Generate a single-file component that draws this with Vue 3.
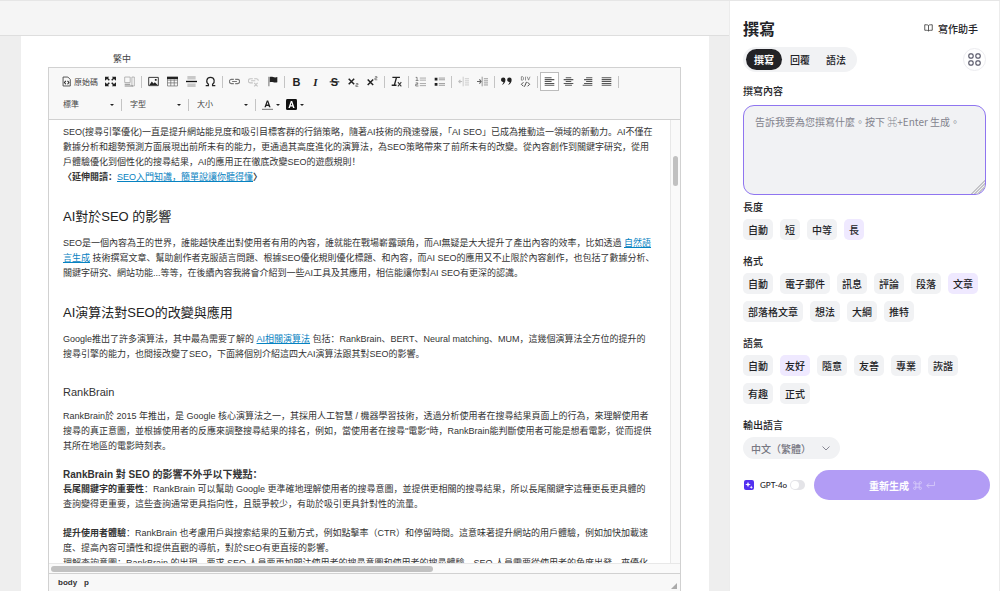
<template>
  <div class="app">
    <main class="workspace">
      <div class="topbar"></div>
      <div class="canvas">
        <div class="page">
          <div class="locale">繁中</div>
          <div class="editor">
            <div class="toolbar">
              <div class="tool-row">
                <button class="tool source" type="button">
                  <svg viewBox="0 0 16 16" class="icon"><path d="M3 1.500h7l3.500 3.500v9.500H3z" fill="none" stroke="#444" stroke-width="1.300" /><path d="M7 7L5 9.500 7 12M9.500 7l2 2.500-2 2.500" fill="none" stroke="#222" stroke-width="1.500" /></svg>
                  <span>原始碼</span>
                </button>
                <div v-for="(group, i) in tools" :key="i" class="tool-group">
                  <button
                    v-for="tool in group"
                    :key="tool.name"
                    type="button"
                    class="tool"
                    :class="{ active: tool.active, disabled: tool.disabled }"
                    :aria-label="tool.name"
                  >
                    <svg viewBox="0 0 16 16" class="icon" v-html="tool.icon"></svg>
                  </button>
                </div>
              </div>
              <div class="tool-row">
                <label v-for="name in combos" :key="name" class="combo">
                  <select :aria-label="name">
                    <option>{{ name }}</option>
                  </select>
                  <span class="caret"></span>
                </label>
                <button class="color-btn" type="button" aria-label="文字顏色">
                  <svg viewBox="0 0 16 16" class="icon"><path d="M3.500 12L7 2h2l3.500 10h-2.300l-.6-2H6.300l-.6 2zM6.900 8h2.200L8 4.500z" fill="#222" /><path d="M0 15h16" stroke="#777" stroke-width="1.500" /></svg>
                  <span class="caret"></span>
                </button>
                <button class="color-btn" type="button" aria-label="背景顏色">
                  <svg viewBox="0 0 16 16" class="icon"><rect width="16" height="16" rx="2" y="0" fill="#111" /><path d="M3.500 13L7 3h2l3.500 10h-2.300l-.6-2H6.300l-.6 2zM6.900 9h2.200L8 5.500z" fill="#fff" /></svg>
                  <span class="caret"></span>
                </button>
              </div>
            </div>

            <div class="content">
              <article class="document">
                <p>SEO(搜尋引擎優化)一直是提升網站能見度和吸引目標客群的行銷策略，隨著AI技術的飛速發展，「AI SEO」已成為推動這一領域的新動力。AI不僅在數據分析和趨勢預測方面展現出前所未有的能力，更通過其高度進化的演算法，為SEO策略帶來了前所未有的改變。從內容創作到關鍵字研究，從用戶體驗優化到個性化的搜尋結果，AI的應用正在徹底改變SEO的遊戲規則！<br /><strong>〈延伸閱讀：</strong><a href="#">SEO入門知識，簡單說讓你聽得懂</a><strong>〉</strong></p>
                <h2>AI對於SEO 的影響</h2>
                <p>SEO是一個內容為王的世界，誰能越快產出對使用者有用的內容，誰就能在戰場嶄露頭角，而AI無疑是大大提升了產出內容的效率，比如透過 <a href="#">自然語言生成</a> 技術撰寫文章、幫助創作者克服語言問題、根據SEO優化規則優化標題、和內容，而AI SEO的應用又不止限於內容創作，也包括了數據分析、關鍵字研究、網站功能...等等，在後續內容我將會介紹到一些AI工具及其應用，相信能讓你對AI SEO有更深的認識。</p>
                <h2>AI演算法對SEO的改變與應用</h2>
                <p>Google推出了許多演算法，其中最為需要了解的 <a href="#">AI相關演算法</a> 包括：RankBrain、BERT、Neural matching、MUM，這幾個演算法全方位的提升的<br />搜尋引擎的能力，也間接改變了SEO，下面將個別介紹這四大AI演算法跟其對SEO的影響。</p>
                <h3>RankBrain</h3>
                <p>RankBrain於 2015 年推出，是 Google 核心演算法之一，其採用人工智慧 / 機器學習技術，透過分析使用者在搜尋結果頁面上的行為，來理解使用者搜尋的真正意圖，並根據使用者的反應來調整搜尋結果的排名，例如，當使用者在搜尋"電影"時，RankBrain能判斷使用者可能是想看電影，從而提供其所在地區的電影時刻表。</p>
                <h4>RankBrain 對 SEO 的影響不外乎以下幾點：</h4>
                <p><strong>長尾關鍵字的重要性</strong>：RankBrain 可以幫助 Google 更準確地理解使用者的搜尋意圖，並提供更相關的搜尋結果，所以長尾關鍵字這種更長更具體的<br />查詢變得更重要，這些查詢通常更具指向性，且競爭較少，有助於吸引更具針對性的流量。</p>
                <p class="spaced"><strong>提升使用者體驗</strong>：RankBrain 也考慮用戶與搜索結果的互動方式，例如點擊率（CTR）和停留時間。這意味著提升網站的用戶體驗，例如加快加載速度、提高內容可讀性和提供直觀的導航，對於SEO有更直接的影響。<br />理解查詢意圖：RankBrain 的出現，要求 SEO 人員要更加關注使用者的搜尋意圖和使用者的搜尋體驗，SEO 人員需要從使用者的角度出發，來優化</p>
              </article>
              <div class="scroll-y"><div class="thumb"></div></div>
            </div>
            <div class="scroll-x"><div class="thumb"></div></div>
            <div class="status">
              <span>body</span>
              <span>p</span>
              <i class="resizer"></i>
            </div>
          </div>
        </div>
      </div>
    </main>

    <aside class="sidebar">
      <header class="side-header">
        <h1>撰寫</h1>
        <a href="#" class="helper">
          <svg viewBox="0 0 18 16" width="9" height="8"><path d="M9 3v11M9 3C8 1.800 6.500 1.500 1.500 1.500v11c5 0 6.500.3 7.500 1.500 1-1.200 2.500-1.500 7.500-1.500v-11C11.500 1.500 10 1.800 9 3z" fill="none" stroke="#333" stroke-width="1.600" /></svg>
          寫作助手
        </a>
      </header>

      <div class="tabs-row">
        <nav class="tabs">
          <button
            v-for="tab in tabs"
            :key="tab"
            type="button"
            :class="{ active: tab === currentTab }"
            @click="currentTab = tab"
          >
            {{ tab }}
          </button>
        </nav>
        <button class="apps" type="button" aria-label="應用">
          <svg viewBox="0 0 24 24" width="13" height="13" fill="none" stroke="#555566" stroke-width="2.200">
            <rect x="1.500" y="1.500" width="8" height="8" rx="3" />
            <rect x="14.500" y="1.500" width="8" height="8" rx="3" />
            <rect x="1.500" y="14.500" width="8" height="8" rx="3" />
            <rect x="14.500" y="14.500" width="8" height="8" rx="3" />
          </svg>
        </button>
      </div>

      <label class="title" for="prompt">撰寫內容</label>
      <textarea id="prompt" v-model="prompt" placeholder="告訴我要為您撰寫什麼。按下 ⌘+Enter 生成。"></textarea>

      <section v-for="section in sections" :key="section.title" class="section">
        <h2 class="title">{{ section.title }}</h2>
        <div class="chips">
          <button
            v-for="option in section.options"
            :key="option"
            type="button"
            class="chip"
            :class="{ selected: option === section.selected }"
            @click="section.selected = option"
          >
            {{ option }}
          </button>
        </div>
      </section>

      <label class="title" for="language">輸出語言</label>
      <div class="language">
        <select id="language">
          <option>中文（繁體）</option>
        </select>
        <svg viewBox="0 0 8 5" width="8" height="5"><path d="M.5.5L4 4 7.500.5" fill="none" stroke="#888894" /></svg>
      </div>

      <footer class="side-footer">
        <svg class="spark" viewBox="0 0 20 20" width="10" height="10"><rect width="20" height="20" rx="4" fill="#5230f0" /><path d="M8 3.500l1.500 4 4 1.500-4 1.500-1.500 4-1.500-4-4-1.500 4-1.500z" fill="#fff" /><path d="M14.500 11l.9 2.600 2.600.9-2.600.9-.9 2.600-.9-2.600-2.600-.9 2.600-.9z" fill="#fff" /></svg>
        <label for="model">GPT-4o</label>
        <input id="model" v-model="useGpt4o" type="checkbox" class="switch" />
        <button class="generate" type="button">
          重新生成
          <svg viewBox="0 0 16 16" width="9" height="9"><path d="M5 5h6v6H5zM5 5H3a2 2 0 1 1 2-2zM11 5V3a2 2 0 1 1 2 2zM11 11h2a2 2 0 1 1-2 2zM5 11v2a2 2 0 1 1-2-2z" fill="none" stroke="#fff" stroke-width="1.500" /></svg>
          <svg viewBox="0 0 16 14" width="9" height="8"><path d="M15 1v7H1.500M5.500 4l-4 4 4 4" fill="none" stroke="#fff" stroke-width="1.500" /></svg>
        </button>
      </footer>
    </aside>
  </div>
</template>

<script setup>
import { ref } from 'vue'

const tabs = ['撰寫', '回覆', '語法']
const currentTab = ref('撰寫')
const prompt = ref('')
const useGpt4o = ref(false)

const combos = ['標準', '字型', '大小']

const sections = ref([
  { title: '長度', options: ['自動', '短', '中等', '長'], selected: '長' },
  {
    title: '格式',
    options: ['自動', '電子郵件', '訊息', '評論', '段落', '文章', '部落格文章', '想法', '大綱', '推特'],
    selected: '文章'
  },
  {
    title: '語氣',
    options: ['自動', '友好', '隨意', '友善', '專業', '詼諧', '有趣', '正式'],
    selected: '友好'
  }
])

const line = (d, width = 1.5, color = '#444') =>
  `<path d="${d}" fill="none" stroke="${color}" stroke-width="${width}"/>`
const fill = (d, color = '#222') => `<path d="${d}" fill="${color}"/>`
const glyph = (text, style, x = 8) =>
  `<text x="${x}" y="14" text-anchor="middle" fill="#222" style="${style}">${text}</text>`

const sans = 'font-family:Liberation Sans,sans-serif;'
const serif = 'font-family:Liberation Serif,serif;'

const tools = [
  [
    {
      name: '最大化',
      icon:
        fill('M0 1h6L4.500 3 7 5.500 5.500 7 3 4.500 0 7zM16 1v6l-3-2.500L10.500 7 9 5.500 11.500 3 10 1zM0 15V9l3 2.500L5.500 9 7 10.500 4.500 13 6 15zM16 15h-6l1.500-2L9 10.500 10.500 9l2.500 2.500L16 9z')
    },
    {
      name: '顯示區塊',
      icon: line('M1 1.500h8v8H1zM11.500 1.500H15v13h-3.500z', 1, '#999') + line('M1 12h8M1 14.500h12', 1.5, '#888')
    }
  ],
  [
    {
      name: '圖片',
      icon: line('M1 2h14v12H1z', 1.4, '#333') + fill('M2 13l3.500-5L8 11l2-2 4 4zM10 4.500h2.500V7H10z')
    },
    {
      name: '表格',
      icon: line('M.7 2h14.600v12.500H.7zM.7 6h14.600M.7 10h14.600M5.500 5v9.500M10.500 5v9.500', 1, '#666') + fill('M0 1h16v3.500H0z')
    },
    {
      name: '水平線',
      icon: fill('M2 0h12v5H2zM2 11h12v5H2z', '#c8c8c8') + line('M0 8h16', 2, '#111')
    },
    { name: '特殊符號', icon: line('M1 14h4v-2C1 9 2 2 8 2s7 7 3 10v2h4', 1.8, '#222') }
  ],
  [
    { name: '連結', icon: line('M7 5H3.500a3 3 0 0 0 0 6H7M9 5h3.500a3 3 0 0 1 0 6H9M4.500 8h7', 1.7, '#777') },
    {
      name: '移除連結',
      disabled: true,
      icon: line('M7 4H3.500a3 3 0 0 0 0 6H7M9 4h3.500a3 3 0 0 1 2.500 3M4.500 7h6M9 10l5 5M14 10l-5 5', 1.5, '#777')
    },
    { name: '錨點', icon: fill('M2 1h1.500v14H2z', '#777') + fill('M4 1.500c4-1.500 6 2 11 0V9c-4 2-7-1.500-11 0z') }
  ],
  [
    { name: '粗體', icon: glyph('B', sans + 'font-size:16px;font-weight:bold') },
    { name: '斜體', icon: glyph('I', serif + 'font-size:16px;font-weight:bold;font-style:italic') },
    { name: '刪除線', icon: glyph('S', sans + 'font-size:16px;font-weight:bold') + line('M1 8.500h14', 1.5, '#222') },
    { name: '下標', icon: line('M1 4l8 8M9 4l-8 8', 2.2, '#222') + line('M11.500 11h3v2h-3v2.500h3.500', 1, '#555') },
    { name: '上標', icon: line('M1 5l8 8M9 5l-8 8', 2.2, '#222') + line('M11.500 1h3v2h-3v2.500h3.500', 1, '#555') }
  ],
  [
    {
      name: '移除格式',
      icon: line('M2 2h11', 1.8, '#222') + line('M8 2L5 13M1 13.500h7', 2, '#222') + line('M10 9l5 6M15 9l-5 6', 1.5, '#333')
    }
  ],
  [
    { name: '編號', icon: line('M7 3h9M7 6h9M7 11h9M7 14h9', 1, '#888') + line('M1 2h2v4M1 6.500h4M1 10h3v2H1v2.500h4', 1, '#555') },
    { name: '項目符號', icon: line('M7 3h9M7 5.500h9M7 11h9M7 13.500h9', 1, '#777') + fill('M1 2.500h4v4H1zM1 10h4v4H1z') }
  ],
  [
    {
      name: '減少縮排',
      disabled: true,
      icon: line('M7.500 1v14M10 4h6M10 7h6M10 10h6M10 13h6', 1.2, '#777') + line('M6 8H1M3.500 5.500L1 8l2.500 2.500', 1.6, '#666')
    },
    {
      name: '增加縮排',
      icon: line('M7.500 1v14M10 4h6M10 7h6M10 10h6M10 13h6', 1.2, '#888') + line('M0 8h6M3.500 5L6 8l-2.500 3', 1.6, '#666')
    }
  ],
  [
    {
      name: '引用',
      icon: fill('M0 5.500a3 3 0 0 1 6.500 0C6.500 9.500 4.500 12 1 13c1.500-1.500 2.500-3 2.500-4.300C1.500 9 0 7.500 0 5.500zM9 5.500a3 3 0 0 1 6.500 0c0 4-2 6.500-5.500 7.500 1.500-1.500 2.500-3 2.500-4.300C10.500 9 9 7.500 9 5.500z')
    },
    {
      name: '建立 div',
      icon:
        line('M2 1v5h2l1-1V2L4 1zM8 1v5.500M10.500 1l2 5 2-5', 1, '#666') +
        line('M5 9l-3 3 3 3M11 9l3 3-3 3M9.500 8.500l-3 7', 1.4, '#444')
    }
  ],
  [
    { name: '靠左對齊', active: true, icon: line('M1 2.500h10M1 5.200h14M1 8h10M1 10.800h14M1 13.500h14', 1.6, '#555') },
    { name: '置中', icon: line('M4 2.500h8M1 5.200h14M4 8h8M1 10.800h14M3 13.500h10', 1.6, '#555') },
    { name: '靠右對齊', icon: line('M6 2.500h9M3 5.200h12M6 8h9M3 10.800h12M1 13.500h14', 1.6, '#555') },
    { name: '左右對齊', icon: line('M1 2.500h14M1 5.200h14M1 8h14M1 10.800h14M1 13.500h14', 1.6, '#555') }
  ]
]
</script>

<style>
html,
body {
  margin: 0;
  background: #f5f5f5;
}
</style>

<style scoped>
* {
  box-sizing: border-box;
}

button,
select,
textarea,
input {
  margin: 0;
  padding: 0;
  border: none;
  background: none;
  font: inherit;
  color: inherit;
}

.app {
  display: flex;
  height: 100vh;
  overflow: hidden;
  border-top: 1px solid #e6e6e6;
  font-family: "Liberation Sans", "Noto Sans CJK SC", sans-serif;
}

.workspace {
  flex: 1;
  min-width: 0;
  display: flex;
  flex-direction: column;
  background: #eeeeee;
}

.topbar {
  flex: none;
  height: 35px;
  background: #f5f5f5;
  border-bottom: 1px solid #dedede;
}

.canvas {
  flex: 1;
  min-height: 0;
  display: flex;
  padding: 0 20px 0 21px;
}

.page {
  flex: 1;
  min-width: 0;
  display: flex;
  flex-direction: column;
  padding: 16px 28px 0 27px;
  background: white;
}

.locale {
  height: 15px;
  padding-left: 65px;
  font-size: 9px;
  line-height: 15px;
  color: #444;
}

.editor {
  flex: 1;
  min-height: 0;
  display: flex;
  flex-direction: column;
  border: 1px solid #d1d1d1;
  border-bottom: none;
}

.toolbar {
  flex: none;
  height: 52px;
  padding: 2px 9px;
  background: #f8f8f8;
  border-bottom: 1px solid #d1d1d1;
}

.tool-row {
  display: flex;
  align-items: center;
  height: 23px;
}

.tool {
  display: flex;
  align-items: center;
  justify-content: center;
  width: 19px;
  height: 19px;
}

.source {
  width: 43px;
  gap: 2px;
  font-size: 8px;
  color: #444;
  white-space: nowrap;
}

.icon {
  flex: none;
  width: 11px;
  height: 11px;
}

.tool.active {
  background: white;
  border: 1px solid #bcbcbc;
}

.tool.disabled {
  opacity: 0.4;
}

.tool-group {
  display: flex;
  align-items: center;
}

.tool-group::after {
  content: "";
  width: 1px;
  height: 12px;
  margin: 0 2px;
  background: #c4c4c4;
}

.combo {
  display: flex;
  align-items: center;
  width: 67px;
  padding-left: 5px;
  font-size: 8px;
  color: #444;
}

.combo select {
  flex: 1;
  appearance: none;
}

.combo::after {
  content: "";
  width: 1px;
  height: 12px;
  margin: 0 3px 0 7px;
  background: #c4c4c4;
}

.caret {
  border: 2px solid transparent;
  border-top-color: #222;
  border-bottom: none;
}

.color-btn {
  display: flex;
  align-items: center;
  gap: 3px;
  width: 24px;
  padding-left: 3px;
}

.content {
  flex: 1;
  min-height: 0;
  display: flex;
}

.document {
  flex: 1;
  min-width: 0;
  overflow: hidden;
  padding: 5px 14px 0;
  font-size: 9px;
  line-height: 15px;
  color: #333;
}

.document p {
  margin: 0;
}

.document h2 {
  margin: 22px 0 9px;
  font-size: 13px;
  line-height: 20px;
  font-weight: 400;
  color: #222;
}

.document h3 {
  margin: 23px 0 9px;
  font-size: 11px;
  line-height: 15px;
  font-weight: 400;
}

.document h4 {
  margin: 13px 0 0;
  font-size: 10px;
  line-height: 15px;
}

.document .spaced {
  margin-top: 14px;
}

.document a {
  color: #0782c1;
}

.scroll-y {
  flex: none;
  width: 10px;
  padding: 36px 2px 0;
  background: #fafafa;
  border-left: 1px solid #e8e8e8;
}

.scroll-y .thumb {
  height: 30px;
  border-radius: 3px;
  background: #c1c1c1;
}

.scroll-x {
  flex: none;
  height: 10px;
  padding: 2px;
  background: #fafafa;
  border-top: 1px solid #e8e8e8;
}

.scroll-x .thumb {
  width: 61%;
  height: 6px;
  border-radius: 3px;
  background: #c1c1c1;
}

.status {
  flex: none;
  display: flex;
  align-items: center;
  gap: 7px;
  height: 18px;
  padding: 0 3px 0 9px;
  background: #f8f8f8;
  border-top: 1px solid #d1d1d1;
  font-size: 8px;
  font-weight: bold;
  color: #333;
}

.resizer {
  margin: 7px 0 0 auto;
  border: 3px solid;
  border-color: transparent #aaa #aaa transparent;
}

.sidebar {
  flex: none;
  width: 271px;
  padding: 15px 13px 0;
  border: 1px solid #ececec;
  border-width: 0 1px;
  background: white;
  font-family: "Noto Sans CJK TC", "DejaVu Sans", sans-serif;
  font-size: 10px;
  font-weight: 500;
  color: #222226;
}

.side-header,
.tabs-row {
  display: flex;
  align-items: center;
  justify-content: space-between;
}

.side-header {
  height: 24px;
  margin-bottom: 7px;
}

.side-header h1 {
  margin: 0;
  font-size: 16px;
  line-height: 24px;
  font-weight: 700;
}

.helper {
  display: flex;
  align-items: center;
  gap: 5px;
  margin-right: 8px;
  color: inherit;
  text-decoration: none;
}

.tabs {
  display: flex;
  padding: 2px 3px;
  border-radius: 13px;
  background: #f1f2f4;
}

.tabs button {
  width: 36px;
  height: 21px;
  border-radius: 11px;
}

.tabs .active {
  background: #222226;
  color: white;
  font-weight: 700;
}

.apps {
  display: flex;
  align-items: center;
  justify-content: center;
  width: 23px;
  height: 23px;
  border: 1px solid #ececf0;
  border-radius: 50%;
}

.title {
  display: block;
  margin: 14px 0 5px;
  font-size: 10px;
  line-height: 14px;
  font-weight: 500;
}

.tabs-row + .title {
  margin: 12px 0 7px;
}

textarea {
  display: block;
  width: 100%;
  height: 90px;
  padding: 8px 11px;
  border: 1px solid #8f75f0;
  border-radius: 11px;
  background: #f1f2f4;
  line-height: 15px;
  font-weight: 400;
}

textarea::placeholder {
  color: #83838d;
}

textarea::-webkit-resizer {
  background: linear-gradient(
    135deg,
    transparent 52%,
    #c4c4c8 52% 57%,
    transparent 57% 62%,
    #c4c4c8 62% 67%,
    transparent 67% 72%,
    #c4c4c8 72% 77%,
    transparent 77%
  );
}

textarea + .section .title {
  margin-top: 5px;
}

.chips {
  display: flex;
  flex-wrap: wrap;
  gap: 7px;
}

.chip {
  height: 21px;
  padding: 0 5px;
  border-radius: 5px;
  background: #f1f2f4;
}

.chip.selected {
  background: #efe9ff;
}

.language {
  display: flex;
  align-items: center;
  width: 97px;
  height: 22px;
  padding: 0 10px 0 8px;
  border-radius: 11px;
  background: #f1f2f4;
  color: #777782;
}

.language select {
  flex: 1;
  min-width: 0;
  appearance: none;
}

.side-footer {
  display: flex;
  align-items: center;
  margin: 11px -4px 0 1px;
}

.side-footer label {
  margin: 0 3px 0 6px;
  font-family: Lato, sans-serif;
  font-size: 8px;
}

.switch {
  flex: none;
  display: flex;
  width: 15px;
  height: 10px;
  padding: 1px;
  appearance: none;
  border-radius: 5px;
  background: #e4e4e8;
}

.switch::before {
  content: "";
  width: 8px;
  height: 8px;
  border-radius: 50%;
  background: white;
}

.switch:checked {
  justify-content: flex-end;
  background: #8f75f0;
}

.generate {
  flex: 1;
  display: flex;
  align-items: center;
  justify-content: center;
  gap: 4px;
  height: 30px;
  margin-left: 9px;
  border-radius: 15px;
  background: #b29cf5;
  color: white;
  font-weight: 700;
}

.generate svg {
  opacity: 0.5;
}
</style>
